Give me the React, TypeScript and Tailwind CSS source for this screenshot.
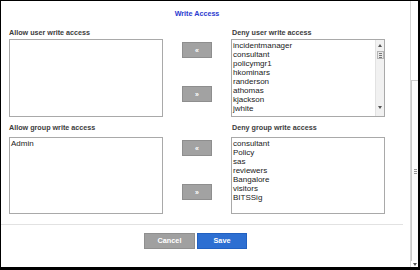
import React from "react";

const users = [
  "incidentmanager",
  "consultant",
  "policymgr1",
  "hkominars",
  "randerson",
  "athomas",
  "kjackson",
  "jwhite",
];

const groups = ["consultant", "Policy", "sas", "reviewers", "Bangalore", "visitors", "BITSSig"];

function Tri({ down }: { down?: boolean }) {
  return (
    <svg width="4" height="3" viewBox="0 0 4 3">
      <path d={down ? "M0 0h4L2 3z" : "M2 0l2 3H0z"} fill="#555" />
    </svg>
  );
}

function ListBox({ items, h, scroll }: { items: string[]; h: string; scroll?: boolean }) {
  return (
    <div className={`flex border border-[#a9a9a9] bg-white ${h}`}>
      <div className="flex-1 pl-[1px] pt-[1px] text-[8px] leading-[9px] text-[#222]">
        {items.map((it) => (
          <div key={it}>{it}</div>
        ))}
      </div>
      {scroll && (
        <div className="flex w-[9px] flex-col items-center border-l border-[#e2e2e2] bg-[#f1f1f1] pt-[4px] pb-[7px]">
          <Tri />
          <div className="mt-[4px] flex h-[8px] w-[7px] flex-col items-center justify-center gap-[1px] border border-[#b5b5b5] bg-[#e9e9e9]">
            <div className="h-px w-[3px] bg-[#777]" />
            <div className="h-px w-[3px] bg-[#777]" />
            <div className="h-px w-[3px] bg-[#777]" />
          </div>
          <div className="flex-1" />
          <Tri down />
        </div>
      )}
    </div>
  );
}

function MoveBtn({ label }: { label: string }) {
  return (
    <div className="flex h-[16px] w-[30px] items-center justify-center border border-[#8e8e8e] bg-[#a2a2a2] text-[7px] font-bold leading-none text-white">
      {label}
    </div>
  );
}

function Section({
  left,
  right,
  leftItems,
  rightItems,
  h,
  labelGap,
  scroll,
}: {
  left: string;
  right: string;
  leftItems: string[];
  rightItems: string[];
  h: string;
  labelGap: string;
  scroll?: boolean;
}) {
  return (
    <div className="grid grid-cols-[154px_19px_30px_19px_154px]">
      <div className={`col-start-1 h-[8px] text-[7.2px] font-bold leading-[8px] text-[#3c3c3c] ${labelGap}`}>{left}</div>
      <div className={`col-start-5 h-[8px] pl-[1px] text-[7.2px] font-bold leading-[8px] text-[#3c3c3c] ${labelGap}`}>{right}</div>
      <div className="col-start-1">
        <ListBox items={leftItems} h={h} />
      </div>
      <div className="col-start-3 flex flex-col gap-[28px] pt-[3px]">
        <MoveBtn label="«" />
        <MoveBtn label="»" />
      </div>
      <div className="col-start-5">
        <ListBox items={rightItems} h={h} scroll={scroll} />
      </div>
    </div>
  );
}

export default function App() {
  return (
    <div className="h-[270px] w-[420px] bg-black pt-px pl-px font-[Liberation_Sans,Arial,sans-serif]">
      <div className="flex h-[266px] w-[417px] bg-white">
        <div className="flex flex-1 flex-col">
          <div className="pl-[8px] pt-[8px]">
            <div className="h-[10px] w-[376px] text-center text-[7.2px] font-bold leading-[10px] text-[#2b3bcf]">
              Write Access
            </div>
            <div className="mt-[10px]">
              <Section
                left="Allow user write access"
                right="Deny user write access"
                leftItems={[]}
                rightItems={users}
                h="h-[78px]"
                labelGap="mb-[2px]"
                scroll
              />
            </div>
            <div className="mt-[7px]">
              <Section
                left="Allow group write access"
                right="Deny group write access"
                leftItems={["Admin"]}
                rightItems={groups}
                h="h-[77px]"
                labelGap="mb-[5px]"
              />
            </div>
          </div>
          <div className="mt-[10px] mr-[7px] h-px bg-[#e2e2e2]" />
          <div className="mt-[8px] flex gap-[2px] pl-[143px]">
            <div className="flex h-[16px] w-[51px] items-center justify-center border border-[#8f8f8f] bg-[#a0a0a0] text-[7.3px] font-bold text-white">
              Cancel
            </div>
            <div className="flex h-[16px] w-[50px] items-center justify-center border border-[#2160c0] bg-[#2d6fd2] text-[7.3px] font-bold text-white">
              Save
            </div>
          </div>
        </div>
        <div className="flex w-[8px] flex-col border-l border-[#d6d6d6]">
          <div className="mt-[79px] flex flex-1 flex-col items-center justify-center border-t border-l border-[#c9c9c9] bg-[#fbfbfb]">
            <div className="flex flex-col gap-px">
              <div className="h-px w-[3px] bg-[#999]" />
              <div className="h-px w-[3px] bg-[#999]" />
              <div className="h-px w-[3px] bg-[#999]" />
            </div>
          </div>
          <div className="flex h-[6px] items-center justify-center">
            <Tri down />
          </div>
        </div>
      </div>
    </div>
  );
}
